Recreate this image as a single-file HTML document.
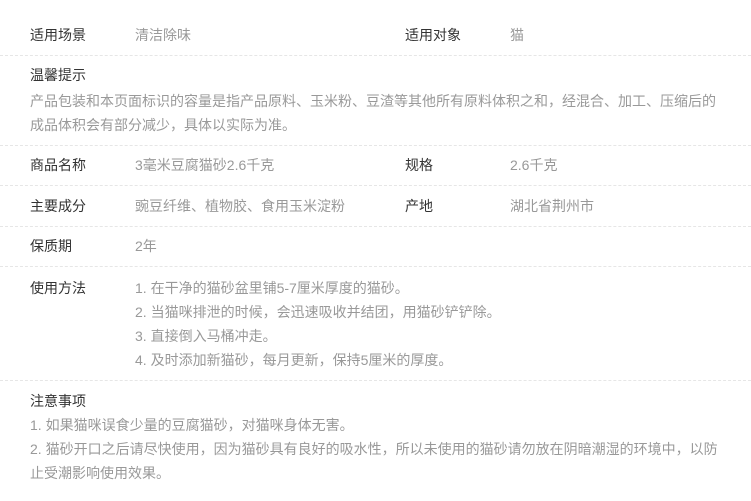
<!DOCTYPE html>
<html><head><meta charset="utf-8"><style>
body{margin:0;width:751px;height:501px;background:#fff;font-family:"Liberation Sans","Noto Sans CJK SC",sans-serif;font-size:14px;position:relative;overflow:hidden}
.t{position:absolute;white-space:nowrap;line-height:24px}
.l{color:#333}.v{color:#999}
.d{position:absolute;left:0;width:751px;border-top:1px dashed #e6e6e6}
</style></head><body>
<div class="t l" style="left:30px;top:23px">适用场景</div>
<div class="t v" style="left:135px;top:23px">清洁除味</div>
<div class="t l" style="left:405px;top:23px">适用对象</div>
<div class="t v" style="left:510px;top:23px">猫</div>
<div class="d" style="top:55px"></div>
<div class="t l" style="left:30px;top:63px">温馨提示</div>
<div class="t v" style="left:30px;top:89px">产品包装和本页面标识的容量是指产品原料、玉米粉、豆渣等其他所有原料体积之和，经混合、加工、压缩后的<br>成品体积会有部分减少，具体以实际为准。</div>
<div class="d" style="top:145px"></div>
<div class="t l" style="left:30px;top:153px">商品名称</div>
<div class="t v" style="left:135px;top:153px">3毫米豆腐猫砂2.6千克</div>
<div class="t l" style="left:405px;top:153px">规格</div>
<div class="t v" style="left:510px;top:153px">2.6千克</div>
<div class="d" style="top:185px"></div>
<div class="t l" style="left:30px;top:194px">主要成分</div>
<div class="t v" style="left:135px;top:194px">豌豆纤维、植物胶、食用玉米淀粉</div>
<div class="t l" style="left:405px;top:194px">产地</div>
<div class="t v" style="left:510px;top:194px">湖北省荆州市</div>
<div class="d" style="top:226px"></div>
<div class="t l" style="left:30px;top:234px">保质期</div>
<div class="t v" style="left:135px;top:234px">2年</div>
<div class="d" style="top:266px"></div>
<div class="t l" style="left:30px;top:276px">使用方法</div>
<div class="t v" style="left:135px;top:276px">1. 在干净的猫砂盆里铺5-7厘米厚度的猫砂。<br>2. 当猫咪排泄的时候，会迅速吸收并结团，用猫砂铲铲除。<br>3. 直接倒入马桶冲走。<br>4. 及时添加新猫砂，每月更新，保持5厘米的厚度。</div>
<div class="d" style="top:380px"></div>
<div class="t l" style="left:30px;top:389px">注意事项</div>
<div class="t v" style="left:30px;top:413px">1. 如果猫咪误食少量的豆腐猫砂，对猫咪身体无害。<br>2. 猫砂开口之后请尽快使用，因为猫砂具有良好的吸水性，所以未使用的猫砂请勿放在阴暗潮湿的环境中，以防<br>止受潮影响使用效果。</div>
</body></html>
